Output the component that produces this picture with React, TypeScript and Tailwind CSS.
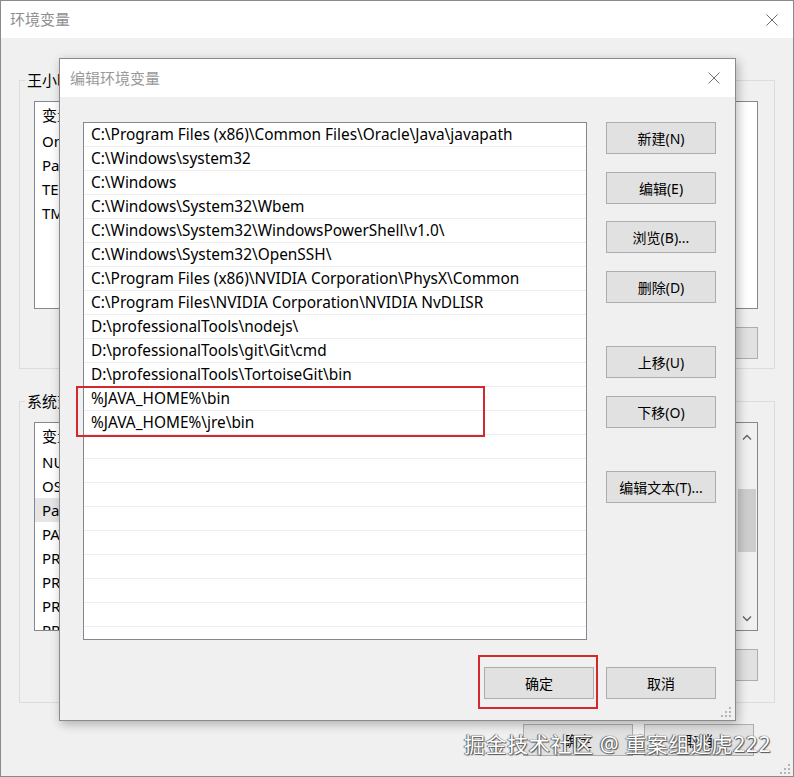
import React from 'react';

const font = "font-['Noto_Sans','Noto_Sans_CJK_SC',sans-serif]";

const paths = [
  'C:\\Program Files (x86)\\Common Files\\Oracle\\Java\\javapath',
  'C:\\Windows\\system32',
  'C:\\Windows',
  'C:\\Windows\\System32\\Wbem',
  'C:\\Windows\\System32\\WindowsPowerShell\\v1.0\\',
  'C:\\Windows\\System32\\OpenSSH\\',
  'C:\\Program Files (x86)\\NVIDIA Corporation\\PhysX\\Common',
  'C:\\Program Files\\NVIDIA Corporation\\NVIDIA NvDLISR',
  'D:\\professionalTools\\nodejs\\',
  'D:\\professionalTools\\git\\Git\\cmd',
  'D:\\professionalTools\\TortoiseGit\\bin',
  '%JAVA_HOME%\\bin',
  '%JAVA_HOME%\\jre\\bin',
];

const userVars = ['OneDrive', 'Path', 'TEMP', 'TMP'];
const sysVars = [
  'NUMBER_OF_PROCESSORS',
  'OS',
  'Path',
  'PATHEXT',
  'PROCESSOR_ARCHITECTURE',
  'PROCESSOR_IDENTIFIER',
  'PROCESSOR_LEVEL',
  'PROCESSOR_REVISION',
];

const CloseIcon = ({ color = '#5a5a5a' }: { color?: string }) => (
  <svg width="12" height="12" viewBox="0 0 12 12">
    <path d="M0.5 0.5 L11.5 11.5 M11.5 0.5 L0.5 11.5" stroke={color} strokeWidth="1" />
  </svg>
);

const Grip = () => (
  <svg width="12" height="12" viewBox="0 0 12 12" fill="#b4b4b4">
    <rect x="9" y="1" width="2" height="2" />
    <rect x="5" y="5" width="2" height="2" />
    <rect x="9" y="5" width="2" height="2" />
    <rect x="1" y="9" width="2" height="2" />
    <rect x="5" y="9" width="2" height="2" />
    <rect x="9" y="9" width="2" height="2" />
  </svg>
);

const Btn = ({ label, className = '' }: { label: string; className?: string }) => (
  <div
    className={`w-[110px] h-[32px] bg-[#e1e1e1] border border-[#adadad] flex items-center justify-center text-[14px] text-black ${className}`}
  >
    {label}
  </div>
);

const BgList = ({ items, selected, scroll }: { items: string[]; selected?: number; scroll?: boolean }) => (
  <div className="relative flex-1 bg-white border border-[#828790] overflow-hidden">
    <div className="h-[27px] flex items-center pl-[7px] text-[15px]">变量</div>
    {items.map((v, i) => (
      <div
        key={i}
        className={`h-[24px] flex items-center pl-[7px] text-[15px] ${i === selected ? 'bg-[#e5e5e5]' : ''}`}
      >
        {v}
      </div>
    ))}
    {scroll && (
      <div className="absolute right-0 top-0 bottom-0 w-[21px] bg-[#f0f0f0] flex flex-col items-center">
        <svg width="10" height="6" viewBox="0 0 10 6" className="mt-[11px]">
          <path d="M1 5.5 L5 1.5 L9 5.5" stroke="#606060" fill="none" strokeWidth="1.3" />
        </svg>
        <div className="mt-[49px] w-[18px] h-[63px] bg-[#cdcdcd]" />
        <div className="flex-1" />
        <svg width="10" height="6" viewBox="0 0 10 6" className="mb-[8px]">
          <path d="M1 0.5 L5 4.5 L9 0.5" stroke="#606060" fill="none" strokeWidth="1.3" />
        </svg>
      </div>
    )}
  </div>
);

const Group = ({ label, children, className = '' }: { label: string; children: React.ReactNode; className?: string }) => (
  <div className={`relative mx-[18px] border border-[#dcdcdc] ${className}`}>
    <div className="absolute -top-[12px] left-[5px] px-[2px] bg-[#f0f0f0] text-[15px] text-black">{label}</div>
    {children}
  </div>
);

export default function App() {
  const rows = [...paths, ...Array(10).fill('')];
  return (
    <div className={`relative w-[794px] h-[777px] overflow-hidden bg-[#f0f0f0] border border-[#8a8a8a] ${font}`}>
      {/* background window: 环境变量 */}
      <div className="h-[37px] bg-white flex items-center justify-between pl-[9px] pr-[15px]">
        <span className="text-[15px] text-[#8f8f8f]">环境变量</span>
        <CloseIcon color="#6a6a6a" />
      </div>
      <div className="pt-[42px] flex flex-col">
        <Group label="王小明 的用户变量(U)" className="h-[289px] flex flex-col pl-[14px] pr-[16px] pt-[20px]">
          <div className="h-[208px] flex">
            <BgList items={userVars} />
          </div>
          <div className="mt-[18px] flex justify-end gap-[10px]">
            <Btn label="新建(N)..." />
            <Btn label="编辑(E)..." />
            <Btn label="删除(D)" className="w-[42px]" />
          </div>
        </Group>
        <Group label="系统变量(S)" className="mt-[32px] h-[302px] flex flex-col pl-[14px] pr-[16px] pt-[20px]">
          <div className="h-[209px] flex">
            <BgList items={sysVars} selected={2} scroll />
          </div>
          <div className="mt-[18px] flex justify-end gap-[10px]">
            <Btn label="新建(W)..." />
            <Btn label="编辑(I)..." />
            <Btn label="删除(L)" className="w-[42px]" />
          </div>
        </Group>
        <div className="mt-[21px] flex justify-end gap-[11px] pr-[39px]">
          <Btn label="确定" />
          <Btn label="取消" />
        </div>
      </div>
      <div className="absolute right-[2px] bottom-[1px]">
        <Grip />
      </div>

      {/* foreground dialog: 编辑环境变量 */}
      <div className="absolute left-[58px] top-[57px] w-[677px] h-[663px] bg-[#f0f0f0] border border-[#8a8a8a] shadow-[2px_3px_10px_rgba(0,0,0,0.28)] flex flex-col">
        <div className="h-[38px] bg-white flex items-center justify-between pl-[10px] pr-[15px]">
          <span className="text-[15px] text-[#999999]">编辑环境变量</span>
          <CloseIcon color="#707070" />
        </div>
        <div className="flex pl-[23px] pt-[25px]">
          <div className="w-[504px] h-[518px] bg-white border border-[#828790] overflow-hidden">
            {rows.map((p, i) => (
              <div
                key={i}
                className="h-[24px] border-b border-[#ececec] flex items-center pl-[7px] text-[15.4px] text-black whitespace-nowrap"
              >
                {p}
              </div>
            ))}
          </div>
          <div className="ml-[19px] flex flex-col">
            <Btn label="新建(N)" />
            <Btn label="编辑(E)" className="mt-[18px]" />
            <Btn label="浏览(B)..." className="mt-[17px]" />
            <Btn label="删除(D)" className="mt-[18px]" />
            <Btn label="上移(U)" className="mt-[43px]" />
            <Btn label="下移(O)" className="mt-[18px]" />
            <Btn label="编辑文本(T)..." className="mt-[43px]" />
          </div>
        </div>
        <div className="mt-[27px] flex justify-end gap-[12px] pr-[19px]">
          <Btn label="确定" />
          <Btn label="取消" />
        </div>
        <div className="absolute right-[3px] bottom-[2px]">
          <Grip />
        </div>
      </div>

      {/* red highlight boxes */}
      <div className="absolute left-[75px] top-[385px] w-[409px] h-[51px] border-2 border-[#d3282e]" />
      <div className="absolute left-[477px] top-[654px] w-[120px] h-[54px] border-2 border-[#d3282e]" />

      {/* watermark */}
      <div className="absolute left-[463px] top-[728px] text-[21px] text-white tracking-[0.6px] [text-shadow:0_0_1px_#444,1px_1px_1px_#555,-1px_0_1px_#666]">
        掘金技术社区 @ 重案组逃虎222
      </div>
    </div>
  );
}
